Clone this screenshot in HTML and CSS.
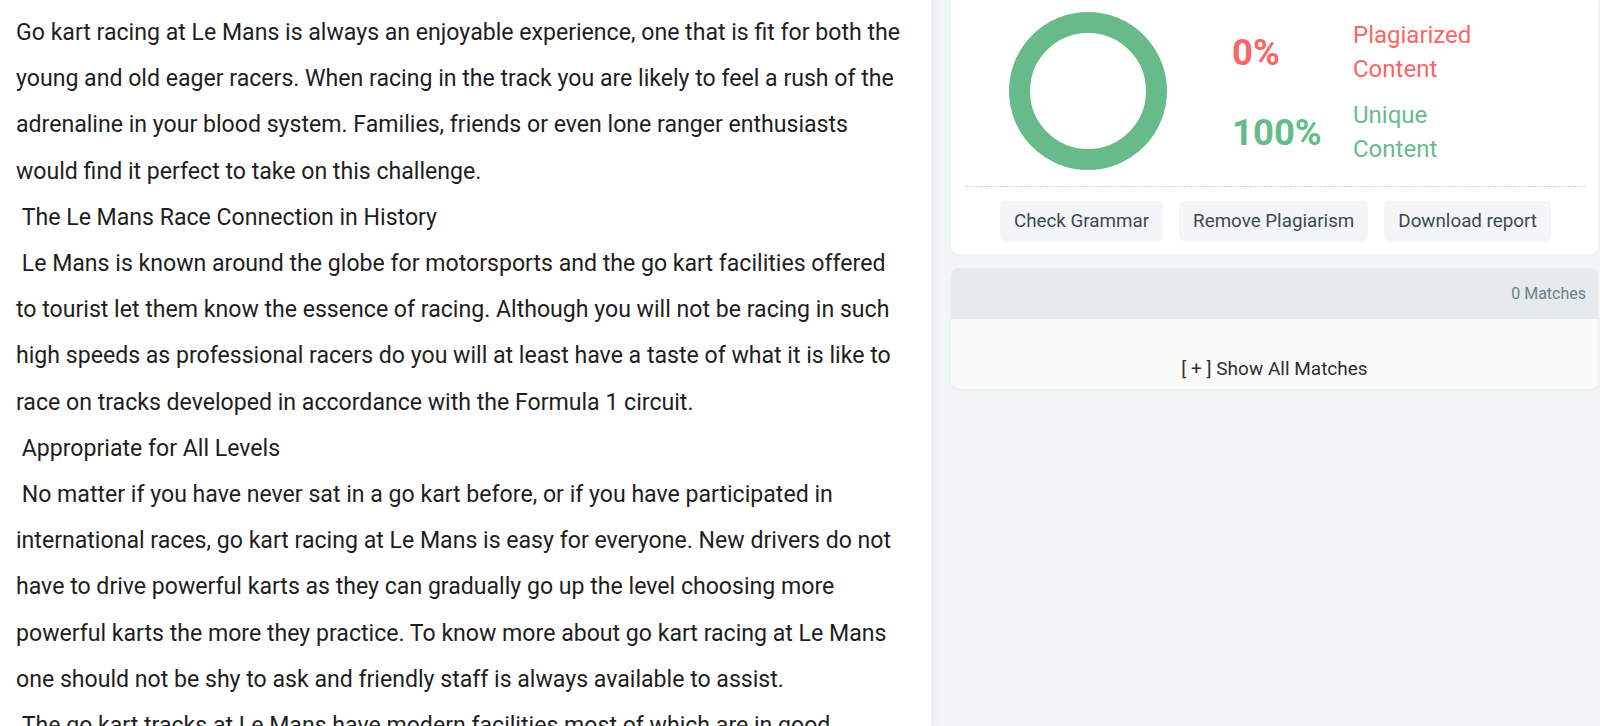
FILE: index.html
```html
<!DOCTYPE html>
<html lang="en">
<head>
<meta charset="utf-8">
<title>Plagiarism Check</title>
<link rel="stylesheet" href="styles.css">
</head>
<body>
<div class="layout">
  <main class="editor">
    <p class="text">Go kart racing at Le Mans is always an enjoyable experience, one that is fit for both the young and old eager racers. When racing in the track you are likely to feel a rush of the adrenaline in your blood system. Families, friends or even lone ranger enthusiasts would find it perfect to take on this challenge.<br>&nbsp;The Le Mans Race Connection in History<br>&nbsp;Le Mans is known around the globe for motorsports and the go kart facilities offered to tourist let them know the essence of racing. Although you will not be racing in such high speeds as professional racers do you will at least have a taste of what it is like to race on tracks developed in accordance with the Formula 1 circuit.<br>&nbsp;Appropriate for All Levels<br>&nbsp;No matter if you have never sat in a go kart before, or if you have participated in international races, go kart racing at Le Mans is easy for everyone. New drivers do not have to drive powerful karts as they can gradually go up the level choosing more powerful karts the more they practice. To know more about go kart racing at Le Mans one should not be shy to ask and friendly staff is always available to assist.<br>&nbsp;The go kart tracks at Le Mans have modern facilities most of which are in good condition and well maintained for the comfort of every visitor.</p>
  </main>
  <aside class="sidebar">
    <section class="card result">
      <div class="summary">
        <div class="donut"></div>
        <div class="stats">
          <div class="stat plag">
            <span class="pct">0%</span>
            <span class="label">Plagiarized<br>Content</span>
          </div>
          <div class="stat uniq">
            <span class="pct">100%</span>
            <span class="label">Unique<br>Content</span>
          </div>
        </div>
      </div>
      <div class="actions">
        <button class="btn">Check Grammar</button>
        <button class="btn">Remove Plagiarism</button>
        <button class="btn">Download report</button>
      </div>
    </section>
    <section class="card matches">
      <div class="matches-head">0 Matches</div>
      <div class="matches-body">[ + ] Show All Matches</div>
    </section>
  </aside>
</div>
</body>
</html>
```

FILE: styles.css
```css
* { box-sizing: border-box; }

html, body {
  margin: 0;
  height: 100%;
  overflow: hidden;
}

body {
  font-family: Roboto, "Liberation Sans", Arial, sans-serif;
  background: #f3f6f7;
}

.layout {
  display: flex;
  height: 726px;
}

.editor {
  width: 931px;
  flex: none;
  background: #fff;
  padding: 10px 16px 0 16px;
  box-shadow: 3px 0 8px rgba(40, 60, 70, 0.06);
  position: relative;
  z-index: 1;
  overflow: hidden;
}

.text {
  margin: 0;
  max-width: 890px;
  font-size: 23.1px;
  line-height: 46.2px;
  color: #1e1e1e;
}

.sidebar {
  flex: 1;
  padding: 0 2px 0 20px;
  display: flex;
  flex-direction: column;
  gap: 14px;
}

.card {
  background: #fff;
  border-radius: 0 0 8px 8px;
  box-shadow: 0 1px 3px rgba(40, 60, 70, 0.06);
}

.result {
  padding: 12px 12px 13px 14px;
}

.summary {
  display: flex;
  align-items: center;
  height: 158px;
}

.donut {
  width: 158px;
  height: 158px;
  margin-left: 44px;
  border-radius: 50%;
  border: 21.5px solid #67bb8a;
  flex: none;
}

.stats {
  margin-left: 65px;
  padding-top: 3px;
  display: flex;
  flex-direction: column;
  gap: 13px;
}

.stat {
  display: flex;
  align-items: center;
}

.pct {
  width: 121px;
  font-size: 36.5px;
  font-weight: 700;
}

.label {
  font-size: 24px;
  line-height: 33.5px;
}

.plag { color: #f76767; }
.uniq { color: #67bb8a; }

.actions {
  margin-top: 16px;
  border-top: 1px dashed #cfd3d5;
  padding-top: 14px;
  display: flex;
  justify-content: center;
  gap: 16px;
}

.btn {
  height: 40px;
  padding: 0 14px;
  border: none;
  border-radius: 5px;
  background: #f3f5f7;
  color: #3b4a51;
  font-family: Roboto, "Liberation Sans", Arial, sans-serif;
  font-size: 18.8px;
}

.matches {
  border-radius: 8px;
  overflow: hidden;
  background: #fafafa;
}

.matches-head {
  height: 51px;
  background: #e5eaec;
  color: #6b7f87;
  font-size: 16px;
  line-height: 51px;
  text-align: right;
  padding-right: 12px;
}

.matches-body {
  padding: 39px 0 9px;
  line-height: 22px;
  font-size: 19px;
  color: #2e2e2e;
  text-align: center;
}
```
